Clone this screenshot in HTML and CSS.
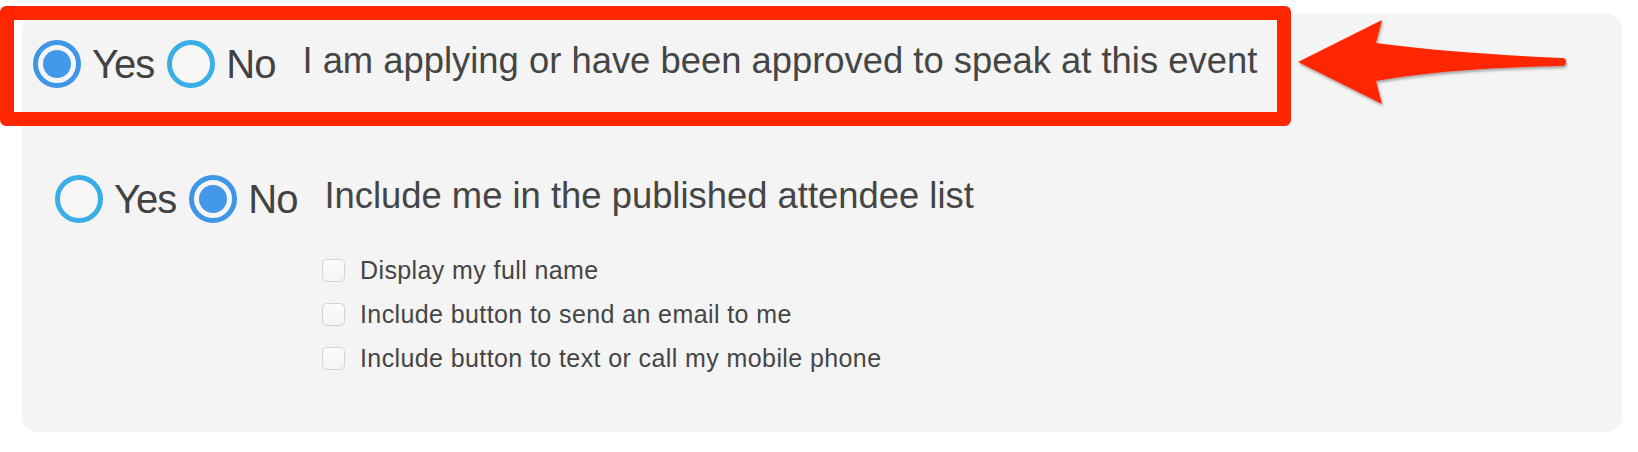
FILE: index.html
```html
<!DOCTYPE html>
<html lang="en">
<head>
<meta charset="utf-8">
<title>Attendee options</title>
<link rel="stylesheet" href="styles.css">
</head>
<body>
<div class="page">
  <section class="panel">
    <div class="option-row speaker-row">
      <div class="radio-group">
        <label class="radio-option"><span class="radio checked"></span><span class="radio-text">Yes</span></label>
        <label class="radio-option"><span class="radio"></span><span class="radio-text">No</span></label>
      </div>
      <span class="option-label">I am applying or have been approved to speak at this event</span>
    </div>

    <div class="option-row attendee-row">
      <div class="radio-group">
        <label class="radio-option"><span class="radio"></span><span class="radio-text">Yes</span></label>
        <label class="radio-option"><span class="radio checked"></span><span class="radio-text">No</span></label>
      </div>
      <span class="option-label">Include me in the published attendee list</span>
    </div>

    <ul class="checklist">
      <li class="check-item"><span class="checkbox"></span><span class="check-text">Display my full name</span></li>
      <li class="check-item"><span class="checkbox"></span><span class="check-text">Include button to send an email to me</span></li>
      <li class="check-item"><span class="checkbox"></span><span class="check-text">Include button to text or call my mobile phone</span></li>
    </ul>
  </section>

  <div class="highlight-box"></div>

  <svg class="annotation-arrow" width="1638" height="452" viewBox="0 0 1638 452" aria-hidden="true">
    <defs>
      <filter id="arrowShadow" x="-10%" y="-30%" width="120%" height="160%">
        <feDropShadow dx="1" dy="2" stdDeviation="1.4" flood-color="#000" flood-opacity="0.35"/>
      </filter>
    </defs>
    <path filter="url(#arrowShadow)" fill="#ff2600"
      d="M1298,62 L1382,20 L1376,43 Q1450,53 1562,58 A4,4 0 0 1 1562,66 Q1450,68 1376,81 L1382,104 Z"/>
  </svg>
</div>
</body>
</html>
```

FILE: styles.css
```css
html, body {
  margin: 0;
  padding: 0;
  background: #ffffff;
}

body {
  font-family: "Liberation Sans", Arial, Helvetica, sans-serif;
  color: #444444;
}

.page {
  position: relative;
  width: 1638px;
  height: 452px;
  overflow: hidden;
}

.panel {
  box-sizing: border-box;
  margin: 14px 16px 0 22px;
  height: 418px;
  background: #f4f4f4;
  border-radius: 15px;
  padding: 26px 0 0 33px;
}

.option-row {
  display: flex;
  align-items: center;
}

.speaker-row {
  margin-left: -22px;
}

.attendee-row {
  margin-top: 87px;
}

.radio-group {
  display: flex;
  align-items: center;
  gap: 13px;
}

.radio-option {
  display: flex;
  align-items: center;
  gap: 11px;
}

.radio {
  box-sizing: border-box;
  width: 48px;
  height: 48px;
  border-radius: 50%;
  border: 5px solid #3aaee6;
  background: #f6f6f6;
  display: flex;
  align-items: center;
  justify-content: center;
  flex: none;
}

.radio.checked {
  border-color: #3f95e6;
}

.radio.checked::after {
  content: "";
  width: 28px;
  height: 28px;
  border-radius: 50%;
  background: #4398ea;
}

.radio-text {
  font-size: 40px;
  line-height: 40px;
  letter-spacing: -1px;
  color: #424242;
}

.option-label {
  margin-left: 27px;
  font-size: 36.4px;
  line-height: 36px;
  margin-bottom: 6px;
  color: #454545;
}

.checklist {
  list-style: none;
  margin: 36px 0 0 267px;
  padding: 0;
  display: flex;
  flex-direction: column;
  gap: 22px;
}

.check-item {
  display: flex;
  align-items: center;
  height: 22px;
}

.checkbox {
  box-sizing: border-box;
  width: 23px;
  height: 23px;
  border: 1px solid #d3d3d3;
  border-radius: 5px;
  background: linear-gradient(#fcfcfc, #f4f4f4);
  flex: none;
}

.check-text {
  margin-left: 15px;
  font-size: 25px;
  line-height: 24px;
  letter-spacing: 0.4px;
  color: #454545;
}

.highlight-box {
  position: absolute;
  left: 0;
  top: 6px;
  width: 1291px;
  height: 120px;
  box-sizing: border-box;
  border: 14px solid #ff2600;
  border-radius: 6px;
  pointer-events: none;
}

.annotation-arrow {
  position: absolute;
  left: 0;
  top: 0;
  pointer-events: none;
}
```
